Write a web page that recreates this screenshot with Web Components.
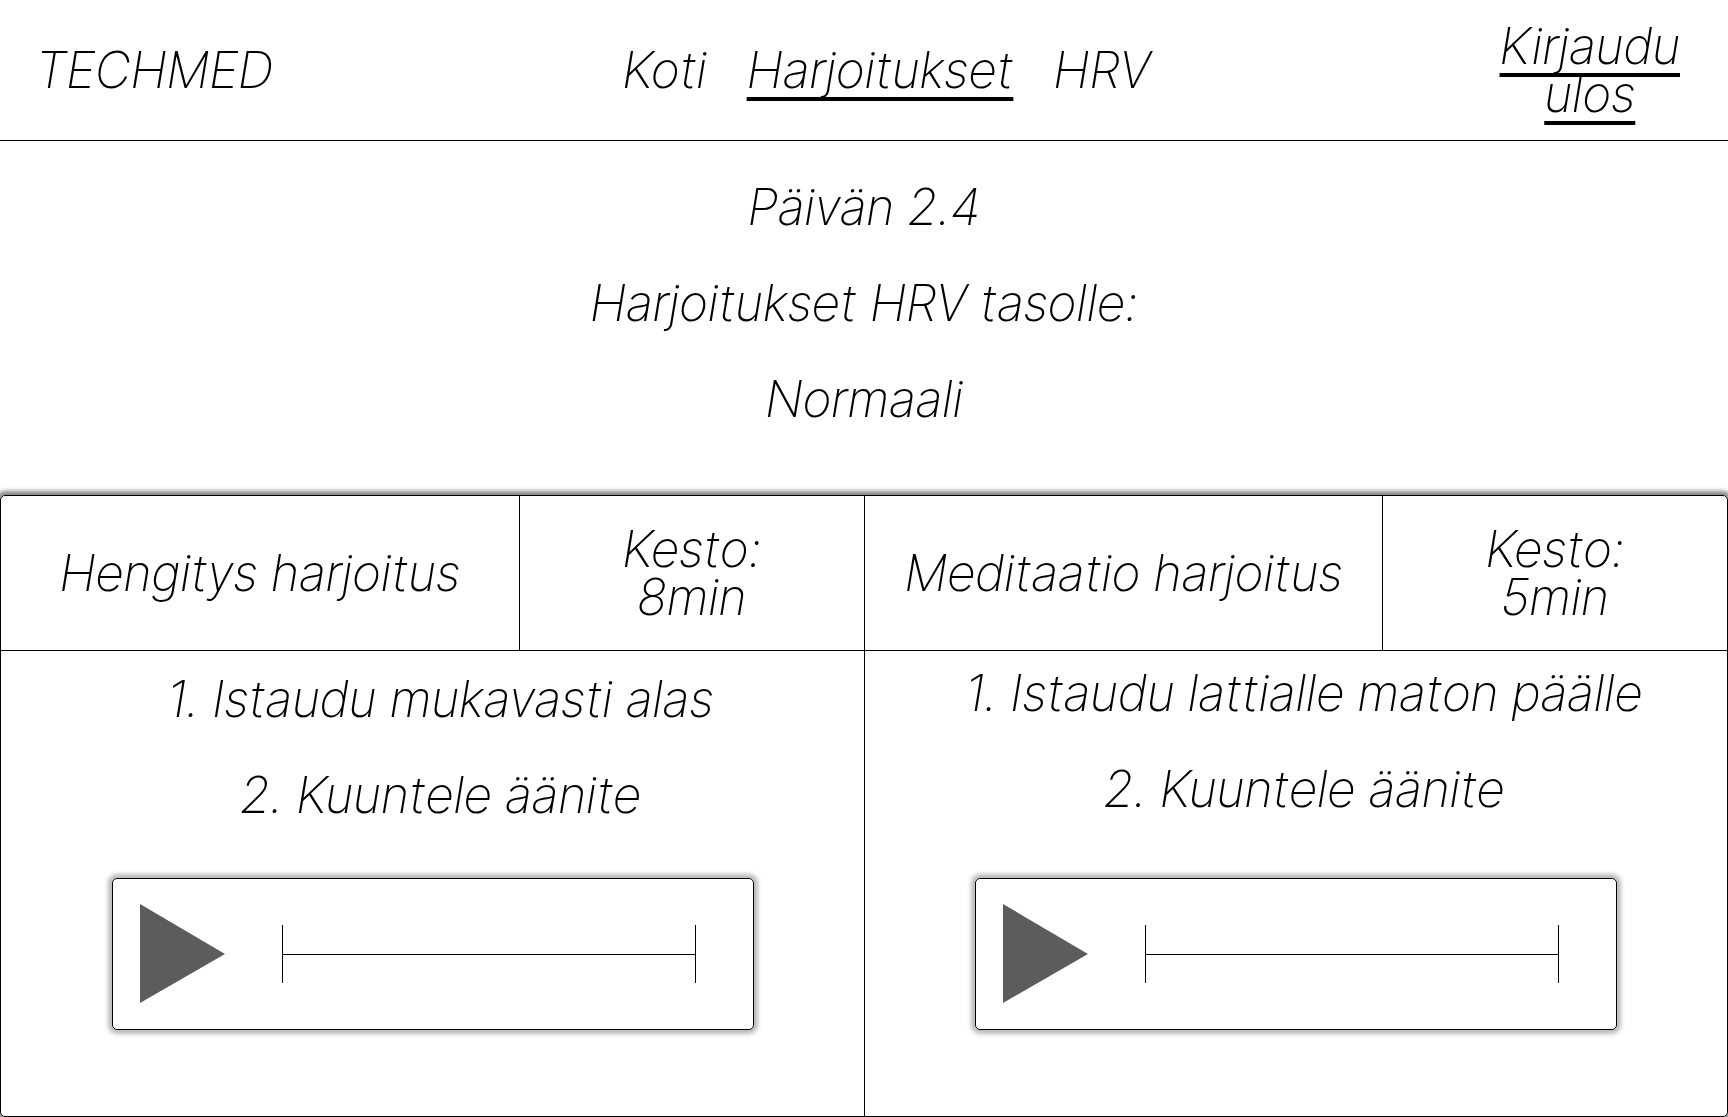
<!DOCTYPE html>
<html lang="fi">
<head>
<meta charset="utf-8">
<meta name="viewport" content="width=device-width, initial-scale=1">
<title>TECHMED – Harjoitukset</title>
<style>
  *, *::before, *::after { box-sizing: border-box; }
  body {
    margin: 0;
    min-height: 100vh;
    display: flex;
    flex-direction: column;
    background: #fff;
    color: #000;
    font: italic 200 50px/48px "Inter Tight", Inter, "Liberation Sans", sans-serif;
  }
  li::marker { font-variant-numeric: normal; }
</style>
</head>
<body>
<tm-header></tm-header>
<tm-intro>
  <p>Päivän 2.4</p>
  <p>Harjoitukset HRV tasolle:</p>
  <p>Normaali</p>
</tm-intro>
<tm-board>
  <tm-exercise style="--list-top: 24px">
    <span slot="title">Hengitys harjoitus</span>
    <span slot="duration">Kesto:<br>8min</span>
    <tm-steps><ol><li>Istaudu mukavasti alas</li><li>Kuuntele äänite</li></ol></tm-steps>
  </tm-exercise>
  <tm-exercise style="--list-top: 18px">
    <span slot="title">Meditaatio harjoitus</span>
    <span slot="duration">Kesto:<br>5min</span>
    <tm-steps><ol><li>Istaudu lattialle maton päälle</li><li>Kuuntele äänite</li></ol></tm-steps>
  </tm-exercise>
</tm-board>

<script>
  const define = (name, html) => {
    customElements.define(name, class extends HTMLElement {
      constructor() {
        super();
        this.attachShadow({ mode: "open" }).innerHTML =
          `<style>*, *::before, *::after { box-sizing: border-box; }</style>${html}`;
      }
    });
  };

  define("tm-nav-link", `
    <style>
      :host { display: block; }
      a { color: inherit; text-decoration: none; }
      :host([underlined]) a {
        text-decoration: underline;
        text-decoration-thickness: 4px;
        text-decoration-skip-ink: none;
        text-underline-offset: 9px;
      }
    </style>
    <a href="#"><slot></slot></a>`);

  define("tm-header", `
    <style>
      :host { display: block; border-bottom: 1px solid #000; }
      header {
        display: flex;
        align-items: center;
        justify-content: space-between;
        min-height: 140px;
        padding: 0 48px 0 36px;
      }
      nav { display: flex; gap: 40px; }
      .logout { text-align: center; }
    </style>
    <header>
      <div>TECHMED</div>
      <nav>
        <tm-nav-link>Koti</tm-nav-link>
        <tm-nav-link underlined>Harjoitukset</tm-nav-link>
        <tm-nav-link>HRV</tm-nav-link>
      </nav>
      <tm-nav-link class="logout" underlined>Kirjaudu<br>ulos</tm-nav-link>
    </header>`);

  define("tm-intro", `
    <style>
      :host { display: block; text-align: center; padding: 42px 0 72px; }
      section { display: flex; flex-direction: column; gap: 48px; }
      ::slotted(p) { margin: 0; }
    </style>
    <section><slot></slot></section>`);

  define("tm-board", `
    <style>
      :host {
        flex: 1;
        display: grid;
        grid-template-columns: 1fr 1fr;
        border: 1px solid #000;
        border-radius: 5px;
        box-shadow: 0 0 4px 4px #888;
      }
      ::slotted(:not(:first-child)) { border-left: 1px solid #000; }
    </style>
    <slot></slot>`);

  define("tm-exercise", `
    <style>
      :host { display: flex; flex-direction: column; min-width: 0; }
      header {
        display: grid;
        grid-template-columns: 3fr 2fr;
        min-height: 155px;
        border-bottom: 1px solid #000;
        text-align: center;
      }
      header > div { display: flex; align-items: center; justify-content: center; }
      header > div + div { border-left: 1px solid #000; }
      .body {
        flex: 1;
        display: flex;
        flex-direction: column;
        padding: var(--list-top) 0 86px;
      }
      tm-player { width: 642px; max-width: 100%; margin: auto auto 0; }
    </style>
    <header>
      <div><slot name="title"></slot></div>
      <div><slot name="duration"></slot></div>
    </header>
    <div class="body">
      <slot></slot>
      <tm-player></tm-player>
    </div>`);

  define("tm-steps", `
    <style>
      :host { display: block; }
      ::slotted(ol) {
        display: flex;
        flex-direction: column;
        gap: 48px;
        margin: 0;
        padding: 0 0 0 16px;
        list-style-position: inside;
        text-align: center;
      }
    </style>
    <slot></slot>`);

  define("tm-player", `
    <style>
      :host {
        display: flex;
        align-items: center;
        gap: 57px;
        height: 152px;
        padding: 0 57px 0 27px;
        border: 1px solid #000;
        border-radius: 5px;
        box-shadow: 0 0 4px 4px #bbb;
      }
      button { display: block; flex: none; margin: 0; padding: 0; border: 0; background: none; }
      svg { display: block; width: 85px; height: 100px; fill: #5c5c5c; }
      input {
        appearance: none;
        flex: 1;
        min-width: 0;
        height: 58px;
        margin: 0;
        border: solid #000;
        border-width: 0 1px;
        background: linear-gradient(#000, #000) 0 29px / 100% 1px no-repeat;
      }
      input::-webkit-slider-thumb { appearance: none; width: 1px; height: 58px; background: transparent; }
    </style>
    <button type="button" aria-label="Toista"><svg viewBox="0 0 85 100"><path d="M0 0L85 50L0 99Z"/></svg></button>
    <input type="range" min="0" max="100" value="0" aria-label="Kohta">`);
</script>
</body>
</html>
